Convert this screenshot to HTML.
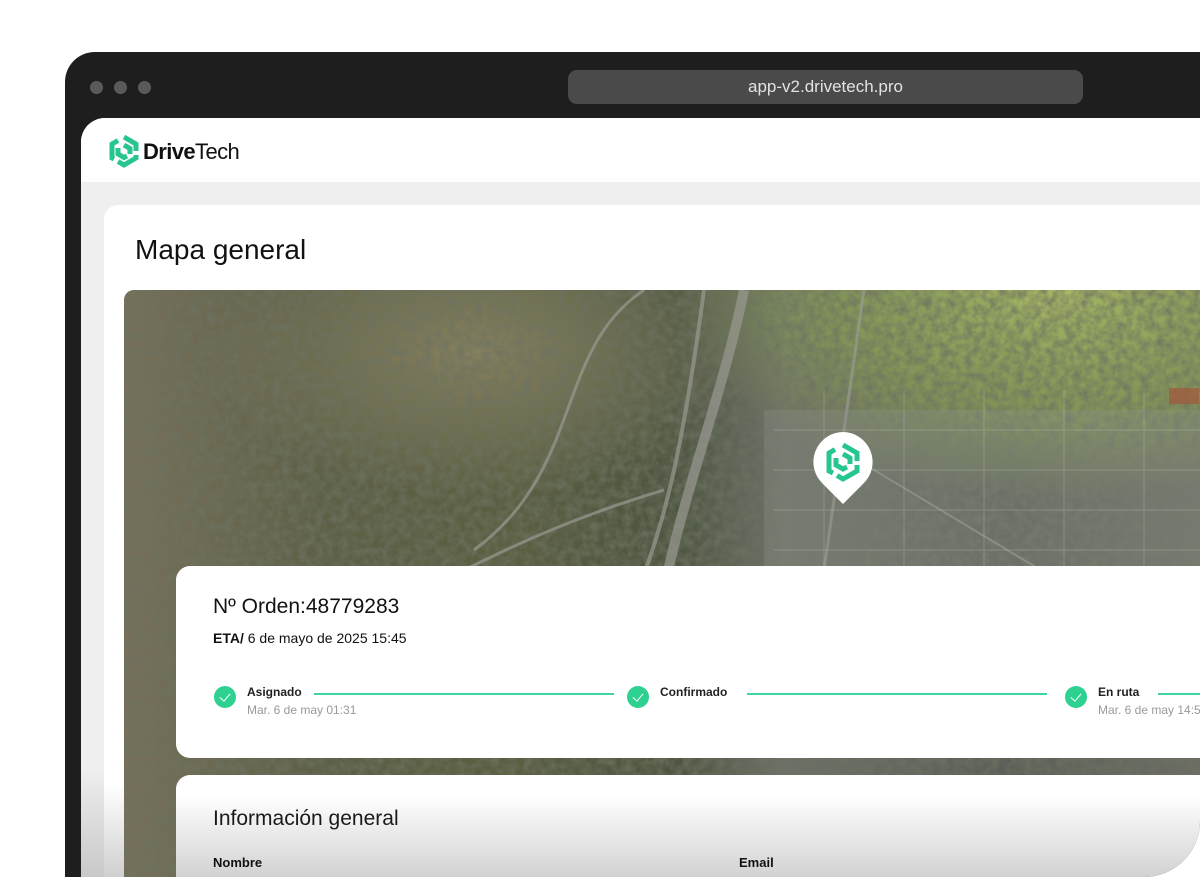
<!DOCTYPE html>
<html><head><meta charset="utf-8"><style>
*{margin:0;padding:0;box-sizing:border-box}
html,body{width:1200px;height:877px;overflow:hidden;background:#fff;font-family:"Liberation Sans",sans-serif}
.clip{position:absolute;left:0;top:0;width:1200px;height:877px;border-bottom-right-radius:56px;overflow:hidden}
.frame{position:absolute;left:65px;top:52px;width:1200px;height:900px;background:#1e1e1e;border-top-left-radius:30px}
.dot{position:absolute;top:81px;width:13px;height:13px;border-radius:50%;background:#5a5a5a}
.url{position:absolute;left:568px;top:70px;width:515px;height:34px;background:#4a4a4a;border-radius:9px;color:#e2e2e2;font-size:17px;text-align:center;line-height:34px}
.app{position:absolute;left:81px;top:118px;width:1200px;height:800px;background:linear-gradient(#efefef 0,#efefef 650px,#c8c8c8 759px,#c8c8c8 800px);border-top-left-radius:24px;overflow:hidden}
.hdr{position:absolute;left:0;top:0;width:100%;height:64px;background:#fff}
.card{position:absolute;left:104px;top:205px;width:1200px;height:720px;background:linear-gradient(#fff 0,#fff 580px,#d0d0d0 672px,#d0d0d0 720px);border-radius:14px}
h1{position:absolute;left:135px;top:234px;font-size:28px;font-weight:normal;color:#111}
.map{position:absolute;left:124px;top:290px;width:1100px;height:600px;border-radius:10px;overflow:hidden}
.oc{position:absolute;left:176px;top:566px;width:1100px;height:192px;background:#fff;border-radius:14px}
.ic{position:absolute;left:176px;top:775px;width:1100px;height:102px;background:linear-gradient(#fff 0,#fff 20px,#d2d2d2 102px);border-radius:14px 14px 0 0}
.t{position:absolute;color:#111;white-space:nowrap}
.chk{position:absolute;width:22px;height:22px;border-radius:50%;background:#2fd191}
.chk:after{content:"";position:absolute;left:8px;top:5px;width:5px;height:9px;border:solid #fff;border-width:0 1.6px 1.6px 0;transform:rotate(40deg)}
.ln{position:absolute;height:2px;background:#3dd6a0}
</style></head><body>
<div class="clip">
<div class="frame"></div>
<div class="dot" style="left:90px"></div><div class="dot" style="left:114px"></div><div class="dot" style="left:138px"></div>
<div class="url">app-v2.drivetech.pro</div>
<div class="app"><div class="hdr"></div></div>
<svg style="position:absolute;left:108px;top:134px" width="32" height="34" viewBox="0 0 32 34">
<g fill="none" stroke="#27c68e" stroke-width="5" stroke-linejoin="miter">
<path d="M16 3 L28 10 L28 17"/><path d="M28 21 L28 24 L16 31 L10 27.5"/><path d="M6 25 L4 24 L4 10 L10 6.5"/>
<path d="M16 11 L22 14.5 L22 20"/><path d="M19 22 L16 23.5 L10 20 L10 14"/></g></svg>
<div class="t" style="left:143px;top:139px;font-size:22px;letter-spacing:-0.6px"><b>Drive</b><span style="font-weight:normal">Tech</span></div>
<div class="card"></div>
<h1>Mapa general</h1>
<div class="map">
<svg width="1100" height="600">
<defs>
<linearGradient id="g1" x1="0" x2="1" y1="0" y2="0">
<stop offset="0" stop-color="#77705a"/><stop offset=".18" stop-color="#5e5f45"/><stop offset=".35" stop-color="#5a5e40"/><stop offset=".5" stop-color="#4d5540"/><stop offset=".6" stop-color="#6d7068"/><stop offset=".8" stop-color="#5b5f58"/><stop offset="1" stop-color="#6e6f66"/></linearGradient>
<radialGradient id="g2" cx=".85" cy="0" r=".35"><stop offset="0" stop-color="#a7b865"/><stop offset=".6" stop-color="#8a9e55" stop-opacity=".8"/><stop offset="1" stop-color="#8a9e55" stop-opacity="0"/></radialGradient>
<radialGradient id="g3" cx=".32" cy=".1" r=".25"><stop offset="0" stop-color="#86805f"/><stop offset="1" stop-color="#86805f" stop-opacity="0"/></radialGradient>
<filter id="n"><feTurbulence type="fractalNoise" baseFrequency=".12" numOctaves="3"/><feColorMatrix values="0 0 0 0 .15 0 0 0 0 .17 0 0 0 0 .12 0 0 0 1.6 -.45"/></filter>
</defs>
<rect width="1100" height="600" fill="url(#g1)"/>
<rect width="1100" height="600" fill="url(#g3)"/>
<rect width="1100" height="600" fill="url(#g2)"/>
<rect width="1100" height="600" filter="url(#n)" opacity=".9"/>
<g stroke="#9a9a92" fill="none" opacity=".7">
<path d="M620 0 C600 100 560 200 540 300" stroke-width="10"/>
<path d="M580 0 C560 150 540 250 500 330" stroke-width="4"/>
<path d="M520 0 C430 60 460 180 350 260" stroke-width="3"/>
<path d="M300 300 C380 260 440 230 540 200" stroke-width="3"/>
<path d="M700 150 L1000 330" stroke-width="2"/>
<path d="M740 0 L700 280" stroke-width="3"/>
</g>
<g fill="#8f948c" opacity=".3">
<rect x="640" y="120" width="460" height="180"/>
</g>
<g stroke="#c8cac2" stroke-width="1.5" opacity=".2">
<path d="M650 140H1100M650 180H1100M650 220H1100M650 260H1100M700 100V300M780 100V300M860 100V300M940 100V300M1020 100V300"/>
</g>
<rect x="1045" y="98" width="30" height="16" fill="#a5573c" opacity=".7"/>
</svg>
</div>
<svg style="position:absolute;left:811px;top:430px" width="64" height="76" viewBox="0 0 64 76">
<path d="M32 2 A30 30 0 0 1 52 54 L32 74 L12 54 A30 30 0 0 1 32 2Z" fill="#fff"/>
<g transform="translate(14,13)" fill="none" stroke="#27c68e" stroke-width="5">
<path d="M18 2 L32 10 L32 18"/><path d="M32 22 L32 28 L18 36 L12 32.5"/><path d="M8 30 L4 28 L4 10 L10 6.5"/>
<path d="M18 11 L25 15 L25 21"/><path d="M22 24 L18 26 L11 22 L11 15"/></g></svg>
<div class="oc"></div>
<div class="t" style="left:213px;top:595px;font-size:21px">Nº Orden:48779283</div>
<div class="t" style="left:213px;top:630px;font-size:14px"><b>ETA/</b> 6 de mayo de 2025 15:45</div>
<div class="chk" style="left:214px;top:686px"></div>
<div class="t" style="left:247px;top:685px;font-size:12px;font-weight:bold;color:#222">Asignado</div>
<div class="t" style="left:247px;top:703px;font-size:12px;color:#999">Mar. 6 de may 01:31</div>
<div class="ln" style="left:314px;top:693px;width:300px"></div>
<div class="chk" style="left:627px;top:686px"></div>
<div class="t" style="left:660px;top:685px;font-size:12px;font-weight:bold;color:#222">Confirmado</div>
<div class="ln" style="left:747px;top:693px;width:300px"></div>
<div class="chk" style="left:1065px;top:686px"></div>
<div class="t" style="left:1098px;top:685px;font-size:12px;font-weight:bold;color:#222">En ruta</div>
<div class="t" style="left:1098px;top:703px;font-size:12px;color:#999">Mar. 6 de may 14:5</div>
<div class="ln" style="left:1158px;top:693px;width:60px"></div>
<div class="ic"></div>
<div class="t" style="left:213px;top:807px;font-size:21px;color:#1a1a1a">Información general</div>
<div class="t" style="left:213px;top:855px;font-size:13px;font-weight:bold">Nombre</div>
<div class="t" style="left:739px;top:855px;font-size:13px;font-weight:bold">Email</div>
</div>
</body></html>
